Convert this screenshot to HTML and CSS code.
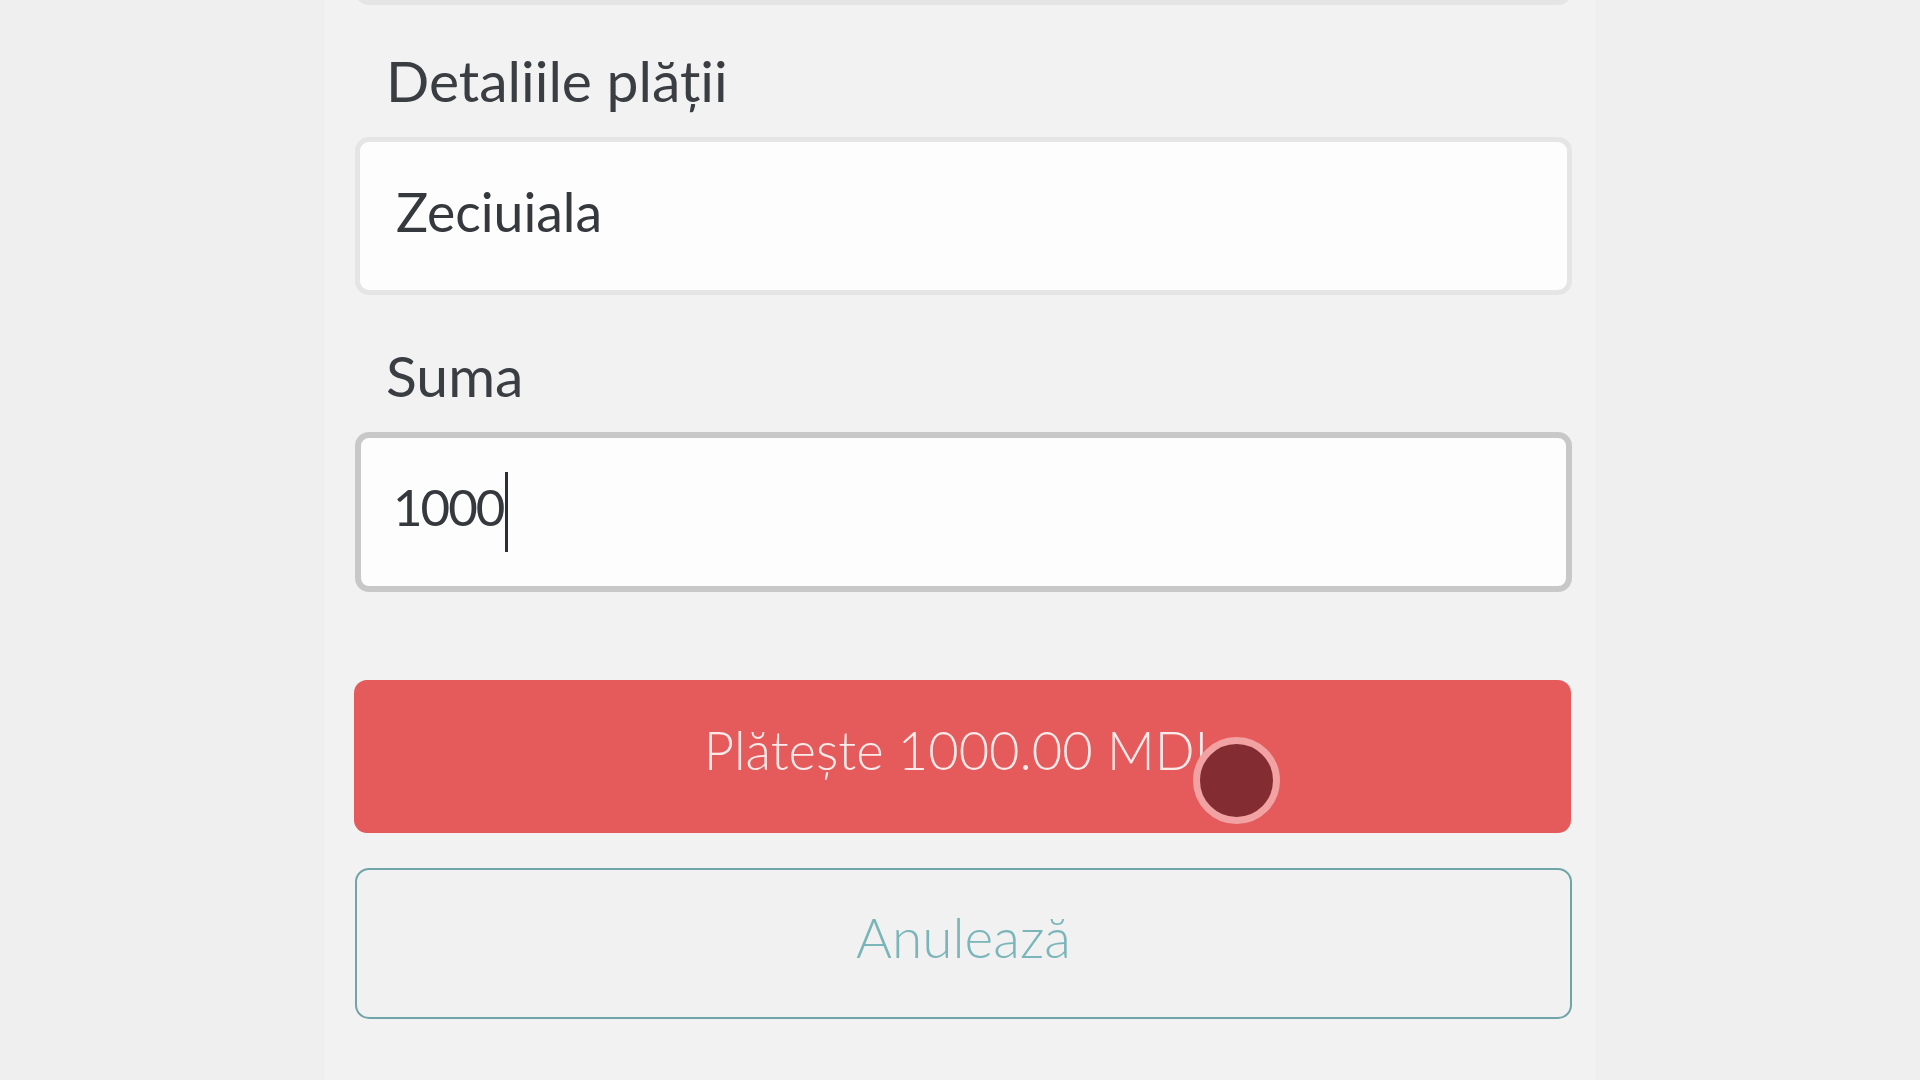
FILE: index.html
```html
<!DOCTYPE html>
<html lang="ro">
<head>
<meta charset="utf-8">
<title>Plată</title>
<link rel="stylesheet" href="styles.css">
</head>
<body>
<main class="panel">
  <div class="field field-prev">
    <div class="input"></div>
  </div>
  <div class="field">
    <label class="label">Detaliile plății</label>
    <div class="input"><span class="value">Zeciuiala</span></div>
  </div>
  <div class="field">
    <label class="label">Suma</label>
    <div class="input input-focus"><span class="value value-num">1000</span><span class="caret"></span></div>
  </div>
  <div class="actions">
    <button class="btn btn-pay">Plătește 1000.00 MDL<span class="touch"></span></button>
    <button class="btn btn-cancel">Anulează</button>
  </div>
</main>
</body>
</html>
```
FILE: styles.css
```css
html, body {
  margin: 0;
  padding: 0;
  height: 100%;
  background: #efefef;
  overflow: hidden;
}
body {
  font-family: Lato, "Noto Sans", sans-serif;
}
.panel {
  display: flow-root;
  margin-left: 325px;
  width: 1270px;
  height: 1080px;
  box-sizing: border-box;
  background: #f2f2f2;
  padding: 0 23px 0 30px;
}
.field {
  display: flex;
  flex-direction: column;
}
.field + .field {
  margin-top: 46px;
}
.field-prev {
  margin-top: -153px;
}
.field-prev + .field {
  margin-top: 41px;
}
.label {
  font-size: 57px;
  line-height: 68px;
  color: #3a3d42;
  padding-left: 31px;
  margin-bottom: 23px;
}
.input {
  height: 138px;
  border: 5px solid #e5e5e5;
  border-radius: 14px;
  background: #fdfdfd;
  display: flex;
  align-items: center;
  padding: 0 0 10px 36px;
  box-sizing: content-box;
  font-size: 53.5px;
  color: #35383d;
}
.input-focus {
  border: 6px solid #c8c8c8;
  padding-left: 32px;
}
.value {
  line-height: 1.2;
}
.value-num {
  font-size: 51px;
  letter-spacing: -2px;
}
.caret {
  display: inline-block;
  width: 3px;
  height: 80px;
  background: #2c2e33;
  margin-left: 2px;
  margin-top: 10px;
}
.actions {
  display: flex;
  flex-direction: column;
  margin-top: 88px;
  gap: 35px;
}
.btn {
  font-family: Lato, "Noto Sans", sans-serif;
  display: flex;
  justify-content: center;
  align-items: center;
  width: 100%;
  box-sizing: border-box;
  margin: 0;
  cursor: pointer;
}
.btn-pay {
  position: relative;
  height: 153px;
  margin-left: -1px;
  background: #e55a5a;
  border: none;
  border-radius: 13px;
  color: #fbeaea;
  font-size: 52.5px;
  font-weight: 300;
  padding-bottom: 16px;
}
.btn-cancel {
  height: 151px;
  background: #f1f1f1;
  border: 2.5px solid #6fa4a9;
  border-radius: 14px;
  color: #7ab6b9;
  font-size: 55px;
  font-weight: 300;
  padding-bottom: 15px;
}
.touch {
  position: absolute;
  left: 839px;
  top: 57px;
  width: 73px;
  height: 73px;
  border-radius: 50%;
  background: #832d33;
  border: 7px solid #f2a2a3;
}
```
